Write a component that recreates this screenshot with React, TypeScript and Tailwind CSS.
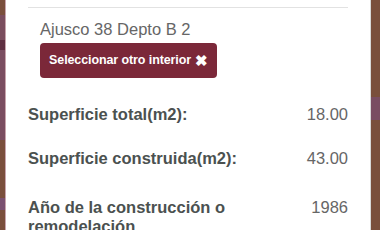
const Strip = ({ side }: { side: "left" | "right" }) =>
  side === "left" ? (
    <div className="flex w-[5px] shrink-0 flex-col">
      <div className="h-[15px] bg-[#7a4f3c]" />
      <div className="h-[25px] bg-[#7a4d5e]" />
      <div className="h-[10px] bg-[#5f3042]" />
      <div className="h-[90px] bg-[#7a4d60]" />
      <div className="h-[58px] bg-[#7a4f3c]" />
      <div className="h-[12px] bg-[#7a5070]" />
      <div className="h-[20px] bg-[#7a4f3c]" />
    </div>
  ) : (
    <div className="flex w-[9px] shrink-0 flex-col">
      <div className="h-[97px] bg-[#7a4f3c]" />
      <div className="h-[23px] bg-[#7a4d62]" />
      <div className="h-[110px] bg-[#7a4f3c]" />
    </div>
  );

const Row = ({ label, value, className }: { label: string; value: string; className: string }) => (
  <div className={`flex items-start justify-between ${className}`}>
    <p className="w-[232px] text-[16.5px] font-bold leading-[19px] text-[#4b5150]">{label}</p>
    <p className="text-[16.5px] leading-[19px] text-[#666]">{value}</p>
  </div>
);

export default function App() {
  return (
    <div
      className="flex h-[230px] w-[380px] overflow-hidden bg-white"
      style={{ fontFamily: '"Liberation Sans", Arial, sans-serif' }}
    >
      <Strip side="left" />
      <div className="w-px shrink-0 bg-[#c9a5ad]" />
      <div className="flex-1 overflow-hidden px-[22px] pt-[7px]">
        <div className="h-px bg-[#e2e2e2]" />
        <div className="pl-[12px] pt-[12px]">
          <p className="text-[16.5px] leading-[19px] text-[#666]">Ajusco 38 Depto B 2</p>
          <button className="mt-[4px] flex h-[35px] w-[177px] items-center justify-center gap-1 rounded-[4px] bg-[#7b2839] text-[12.5px] font-bold tracking-[-0.1px] text-white">
            Seleccionar otro interior
            <span className="text-[15px] leading-none">✖</span>
          </button>
        </div>
        <Row className="mt-[27px]" label="Superficie total(m2):" value="18.00" />
        <Row className="mt-[25px]" label="Superficie construida(m2):" value="43.00" />
        <Row className="mt-[30px]" label="Año de la construcción o remodelación" value="1986" />
      </div>
      <div className="w-px shrink-0 bg-[#d8d8d8]" />
      <Strip side="right" />
    </div>
  );
}
